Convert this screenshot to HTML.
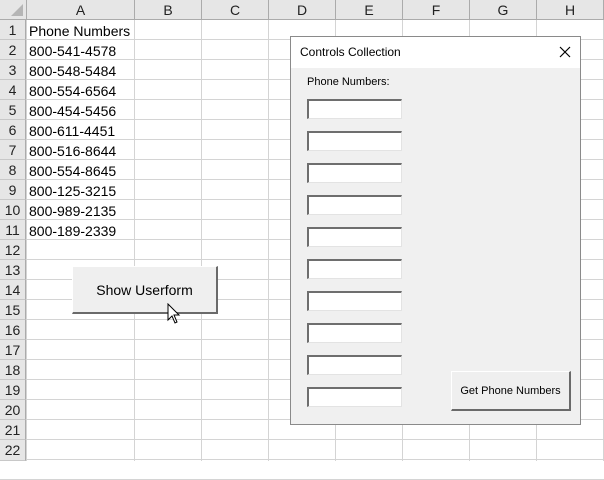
<!DOCTYPE html>
<html><head><style>
*{margin:0;padding:0;box-sizing:border-box}
body{width:604px;height:461px;overflow:hidden;background:#fff;font-family:"Liberation Sans",Calibri,sans-serif;position:relative}
.a{position:absolute}
.vl{position:absolute;top:0;width:1px;height:461px;background:#d4d4d4}
.hl{position:absolute;left:0;width:604px;height:1px;background:#d4d4d4}
.ch{position:absolute;top:0;height:20px;background:#e6e6e6;border-right:1px solid #ababab;border-bottom:1px solid #ababab;font-size:14px;text-align:center;line-height:21px;color:#222}
.rh{position:absolute;left:0;width:26px;height:20px;background:#e6e6e6;border-right:1px solid #ababab;border-bottom:1px solid #c8c8c8;font-size:14px;text-align:center;line-height:21px;color:#222}
.c{position:absolute;left:29px;font-size:14px;line-height:20px;color:#000}
.tb{position:absolute;left:307px;width:95px;height:20px;background:#fff;border-top:2px solid #6e6e6e;border-left:2px solid #6e6e6e;border-right:1px solid #e3e3e3;border-bottom:1px solid #e3e3e3}
.btn{position:absolute;background:#efefef;border-top:1px solid #fff;border-left:1px solid #fff;border-right:2px solid #6a6a6a;border-bottom:2px solid #6a6a6a;color:#000;text-align:center}
</style></head><body>
<div id="g"></div>
<script>
var h='';
var xs=[26,134,201,268,335,402,469,536,603];
for(var i=0;i<xs.length;i++)h+='<div class="vl" style="left:'+xs[i]+'px"></div>';
for(var r=1;r<=23;r++)h+='<div class="hl" style="top:'+(20*r+20-1)+'px"></div>';
var cols=['A','B','C','D','E','F','G','H'];
h+='<div class="ch" style="left:0;width:27px"><div style="position:absolute;right:3px;bottom:3px;width:0;height:0;border-left:12px solid transparent;border-bottom:12px solid #b5b5b5"></div></div>';
for(var i=0;i<8;i++)h+='<div class="ch" style="left:'+(xs[i]+1)+'px;width:'+(xs[i+1]-xs[i])+'px">'+cols[i]+'</div>';
for(var r=1;r<=22;r++)h+='<div class="rh" style="top:'+(20*r)+'px;'+(r==22?'height:21px':'')+'">'+r+'</div>';
var d=['Phone Numbers','800-541-4578','800-548-5484','800-554-6564','800-454-5456','800-611-4451','800-516-8644','800-554-8645','800-125-3215','800-989-2135','800-189-2339'];
for(var i=0;i<d.length;i++)h+='<div class="c" style="top:'+(20*(i+1)+1)+'px">'+d[i]+'</div>';
document.getElementById('g').innerHTML=h;
</script>
<div class="btn" style="left:72px;top:266px;width:146px;height:48px;font-size:14px;line-height:46px">Show Userform</div>
<svg class="a" style="left:167px;top:303px" width="14" height="22" viewBox="0 0 14 22"><path d="M1 1 L1 17 L5 13 L8 20 L10 19 L7 12 L12 12 Z" fill="#fff" stroke="#000" stroke-width="1"/></svg>
<div class="a" style="left:290px;top:36px;width:291px;height:389px;border:1px solid #8a8a8a;background:#f0f0f0">
 <div class="a" style="left:0;top:0;width:289px;height:31px;background:#fff;font-size:12px;line-height:31px;padding-left:9px;color:#000">Controls Collection</div>
 <svg class="a" style="left:268px;top:9px" width="12" height="12"><path d="M1 1L11 11M11 1L1 11" stroke="#000" stroke-width="1.2"/></svg>
 <div class="a" style="left:16px;top:39px;font-size:11px;color:#000">Phone Numbers:</div>
</div>
<div class="tb" style="top:99px"></div><div class="tb" style="top:131px"></div><div class="tb" style="top:163px"></div><div class="tb" style="top:195px"></div><div class="tb" style="top:227px"></div><div class="tb" style="top:259px"></div><div class="tb" style="top:291px"></div><div class="tb" style="top:323px"></div><div class="tb" style="top:355px"></div><div class="tb" style="top:387px"></div>
<div class="btn" style="left:451px;top:371px;width:120px;height:40px;font-size:11px;line-height:38px">Get Phone Numbers</div>
</body></html>
